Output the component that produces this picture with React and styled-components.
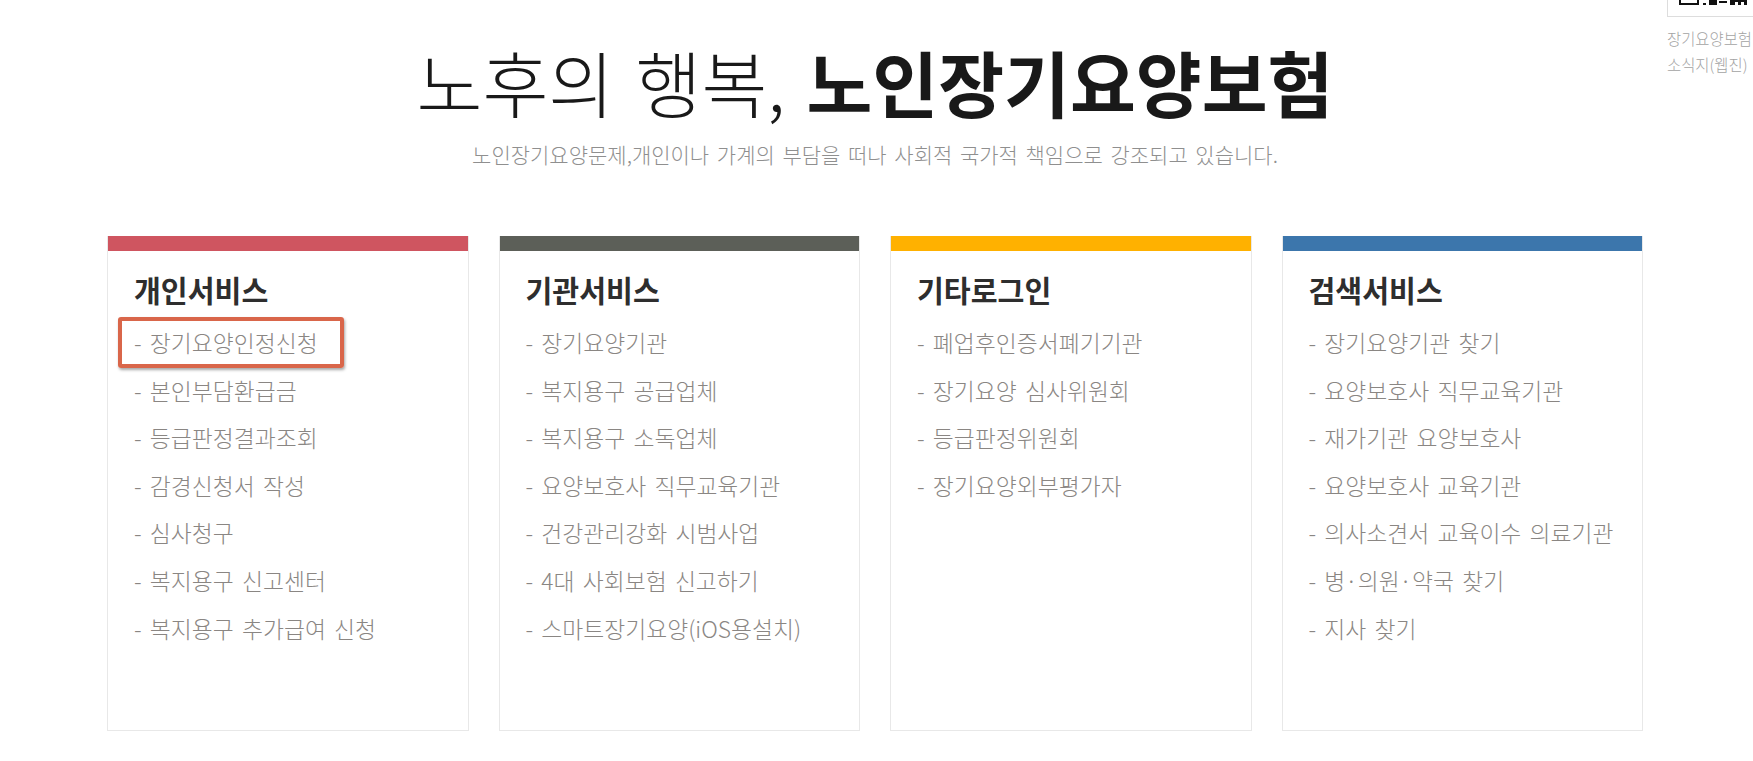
import React from "react";
import styled, { createGlobalStyle } from "styled-components";

const Global = createGlobalStyle`
  html, body { margin: 0; padding: 0; background: #fff; overflow: hidden; }
  body { font-family: "Noto Sans CJK KR", "Noto Sans", sans-serif; width: 1753px; height: 761px; }
`;

const Page = styled.main`
  position: relative;
  width: 1753px;
  height: 761px;
  overflow: hidden;
  box-sizing: border-box;
  padding: 33px 110px 0 107px;
`;

const Hero = styled.header`
  display: flex;
  flex-direction: column;
  align-items: center;
`;

const Headline = styled.h1`
  margin: 0;
  font-size: 71.6px;
  line-height: 96px;
  font-weight: 300;
  color: #191919;
  white-space: nowrap;
  word-spacing: 5.5px;
  & strong { font-weight: 700; word-spacing: 0; }
`;

const Lead = styled.p`
  margin: 11px 0 0;
  font-size: 21px;
  line-height: 28px;
  font-weight: 300;
  color: #8f8f8f;
  white-space: nowrap;
  word-spacing: 3px;
`;

const Grid = styled.section`
  display: grid;
  grid-template-columns: repeat(4, 361.5px);
  column-gap: 30px;
  margin-top: 68px;
`;

const Card = styled.article`
  height: 495px;
  box-sizing: border-box;
  border: 1px solid #e8e8e8;
  border-top: 0;
`;

const Bar = styled.div`
  height: 15px;
  background: ${(p) => p.$color};
`;

const CardTitle = styled.h2`
  margin: 13px 0 0 26px;
  font-size: 29.2px;
  line-height: 50px;
  font-weight: 700;
  color: #2e2e2e;
`;

const List = styled.ul`
  list-style: none;
  margin: 5px 0 0 26px;
  padding: 0;
`;

const Item = styled.li`
  position: relative;
  height: 47.6px;
  line-height: 47.6px;
  font-size: 22.8px;
  font-weight: 300;
  color: #8a8683;
  white-space: nowrap;
  word-spacing: 3.2px;
`;

const Highlight = styled.span`
  position: absolute;
  left: -16px;
  top: -2px;
  width: 226px;
  height: 51px;
  box-sizing: border-box;
  border: 4px solid #d9664a;
  border-radius: 3px;
  box-shadow: 1px 2px 3px rgba(0, 0, 0, 0.35);
`;

const Side = styled.aside`
  position: absolute;
  left: 1667px;
  top: -10px;
  width: 130px;
`;

const QrBox = styled.div`
  box-sizing: border-box;
  height: 27px;
  border: 1px solid #ddd;
  display: flex;
  align-items: flex-end;
  padding: 0 0 11px 11px;
`;

const SideText = styled.p`
  margin: 8px 0 0;
  font-size: 15.4px;
  line-height: 26px;
  font-weight: 300;
  color: #a3a3a3;
  white-space: nowrap;
`;

const columns = [
  { color: "#cf5560", title: "개인서비스", items: ["장기요양인정신청", "본인부담환급금", "등급판정결과조회", "감경신청서 작성", "심사청구", "복지용구 신고센터", "복지용구 추가급여 신청"], mark: 0 },
  { color: "#5c5f58", title: "기관서비스", items: ["장기요양기관", "복지용구 공급업체", "복지용구 소독업체", "요양보호사 직무교육기관", "건강관리강화 시범사업", "4대 사회보험 신고하기", "스마트장기요양(iOS용설치)"] },
  { color: "#ffb100", title: "기타로그인", items: ["폐업후인증서폐기기관", "장기요양 심사위원회", "등급판정위원회", "장기요양외부평가자"] },
  { color: "#3c76ac", title: "검색서비스", items: ["장기요양기관 찾기", "요양보호사 직무교육기관", "재가기관 요양보호사", "요양보호사 교육기관", "의사소견서 교육이수 의료기관", "병·의원·약국 찾기", "지사 찾기"] },
];

const QrFragment = () => (
  <svg width="72" height="5" viewBox="0 0 72 5" aria-hidden="true">
    <path fill="#111" d="M0 0h2v3h16V0h2v5H0zM24 3h3v2h-3zM30 0h8v5h-8zM40 1h8v2h-8zM51 0h17v5h-3V2h-3v3h-3V2h-3v3h-5z" />
  </svg>
);

export default function App() {
  return (
    <Page>
      <Global />
      <Hero>
        <Headline>
          노후의 행복, <strong>노인장기요양보험</strong>
        </Headline>
        <Lead>노인장기요양문제,개인이나 가계의 부담을 떠나 사회적 국가적 책임으로 강조되고 있습니다.</Lead>
      </Hero>
      <Grid>
        {columns.map((c) => (
          <Card key={c.title}>
            <Bar $color={c.color} />
            <CardTitle>{c.title}</CardTitle>
            <List>
              {c.items.map((t, i) => (
                <Item key={t}>
                  - {t}
                  {c.mark === i && <Highlight />}
                </Item>
              ))}
            </List>
          </Card>
        ))}
      </Grid>
      <Side>
        <QrBox>
          <QrFragment />
        </QrBox>
        <SideText>
          장기요양보험
          <br />
          소식지(웹진)
        </SideText>
      </Side>
    </Page>
  );
}
